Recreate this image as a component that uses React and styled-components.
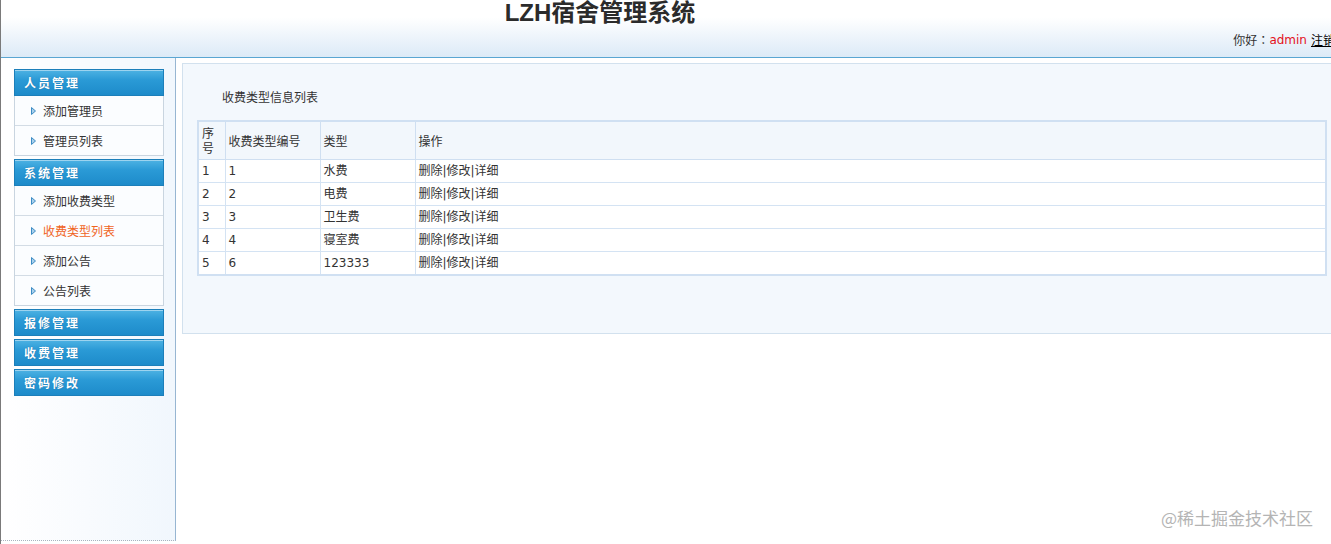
import React from "react";
import styled, { createGlobalStyle } from "styled-components";

const GlobalStyle = createGlobalStyle`
  html, body { margin: 0; padding: 0; height: 100%; }
  body {
    font-family: "DejaVu Sans", "Noto Sans CJK SC", sans-serif;
    font-size: 12px;
    color: #333;
    background: #fff;
    overflow: hidden;
  }
  #root { height: 544px; }
`;

const Page = styled.div`
  position: relative;
  height: 544px;
  border-left: 1px solid #7a7a7a;
  box-sizing: border-box;
  overflow: hidden;
`;

const Header = styled.header`
  height: 58px;
  box-sizing: border-box;
  border-bottom: 1px solid #5aa6d2;
  background: linear-gradient(to bottom, #ffffff 0%, #ffffff 30%, #dceaf7 100%);
  display: flex;
  flex-direction: column;
  overflow: hidden;
`;

const Title = styled.h1`
  margin: 0;
  height: 28px;
  line-height: 26px;
  text-align: center;
  font-family: "Liberation Sans", "Noto Sans CJK SC", sans-serif;
  font-size: 24px;
  font-weight: bold;
  color: #2b2b2b;
  padding-right: 132px;
`;

const UserBar = styled.div`
  display: flex;
  justify-content: flex-end;
  margin-top: 4px;
  margin-right: -4px;
  white-space: nowrap;
  font-size: 12px;
  color: #333;
  line-height: 16px;
`;

const Greeting = styled.span`
  font-family: "Noto Sans CJK TC", "Noto Sans CJK SC", sans-serif;
`;

const UserName = styled.span`
  color: #e4121b;
  margin-right: 4px;
`;

const Logout = styled.a`
  color: #000;
  text-decoration: underline;
  font-family: "Noto Sans CJK SC", sans-serif;
`;

const Body = styled.div`
  display: flex;
  align-items: flex-start;
`;

const Sidebar = styled.aside`
  width: 175px;
  height: 483px;
  flex-shrink: 0;
  box-sizing: border-box;
  border-right: 1px solid #97b6d2;
  border-bottom: 1px dotted #a9b4bf;
  background: linear-gradient(to right, #ffffff 0%, #f1f7fd 100%);
  padding: 11px 0 0 13px;
  display: flex;
  flex-direction: column;
  gap: 3px;
`;

const Group = styled.div`
  width: 150px;
`;

const GroupHead = styled.div`
  height: 27px;
  box-sizing: border-box;
  border: 1px solid #1c7fba;
  background: linear-gradient(to bottom, #4db2e3 0%, #2a9ad6 40%, #1d8bca 100%);
  box-shadow: inset 0 1px 0 rgba(255, 255, 255, 0.45);
  color: #fff;
  font-family: "Noto Sans CJK SC", sans-serif;
  font-weight: bold;
  font-size: 12px;
  letter-spacing: 2px;
  line-height: 25px;
  padding-left: 9px;
  text-shadow: 0 0 1px rgba(0, 60, 110, 0.5);
`;

const ItemList = styled.ul`
  list-style: none;
  margin: 0;
  padding: 0;
  border-left: 1px solid #c9d5e0;
  border-right: 1px solid #c9d5e0;
  background: #fbfdff;
`;

const Item = styled.li`
  height: 30px;
  box-sizing: border-box;
  border-bottom: 1px solid ${(p) => (p.$last ? "#c9d5e0" : "#d3dce5")};
  display: flex;
  align-items: center;
  padding-left: 16px;
  gap: 7px;
  font-family: "Noto Sans CJK SC", sans-serif;
  font-size: 12px;
  color: ${(p) => (p.$active ? "#f0641e" : "#333")};
`;

const Arrow = () => (
  <svg width="5" height="8" viewBox="0 0 5 8">
    <path d="M0.5 0.5 L4.5 4 L0.5 7.5 Z" fill="#a9d0ec" stroke="#3d8cc4" strokeWidth="1" />
  </svg>
);

const Main = styled.main`
  flex: 1;
  padding: 5px 0 0 6px;
  min-width: 0;
`;

const Panel = styled.section`
  height: 271px;
  box-sizing: border-box;
  margin-right: -6px;
  background: #f3f8fd;
  border: 1px solid #d2e1ee;
  padding: 24px 9px 0 14px;
`;

const PanelTitle = styled.div`
  font-family: "Noto Sans CJK SC", sans-serif;
  font-size: 12px;
  line-height: 18px;
  color: #333;
  padding-left: 25px;
  margin-bottom: 14px;
`;

const Table = styled.table`
  width: 100%;
  border-collapse: collapse;
  border: 2px solid #d0e0f2;
  font-family: "DejaVu Sans", "Noto Sans CJK SC", sans-serif;
  font-size: 12px;
  color: #333;
`;

const Th = styled.th`
  font-weight: normal;
  text-align: left;
  vertical-align: middle;
  border: 1px solid #cfdff1;
  background: #f2f7fc;
  height: 38px;
  padding: 0 3px;
  line-height: 15px;
  font-family: "Noto Sans CJK SC", sans-serif;
  width: ${(p) => p.$w || "auto"};
  box-sizing: border-box;
`;

const Td = styled.td`
  border: 1px solid #d4e3f3;
  background: #fff;
  height: 22px;
  padding: 0 3px;
  line-height: 14px;
`;

const Watermark = styled.div`
  position: absolute;
  right: 18px;
  bottom: 14px;
  font-family: "Noto Sans CJK SC", sans-serif;
  font-size: 17px;
  color: #b4b4b4;
  text-shadow: 0 0 2px #fff;
  pointer-events: none;
`;

const menus = [
  { title: "人员管理", items: ["添加管理员", "管理员列表"] },
  { title: "系统管理", items: ["添加收费类型", "收费类型列表", "添加公告", "公告列表"] },
  { title: "报修管理", items: [] },
  { title: "收费管理", items: [] },
  { title: "密码修改", items: [] },
];

const rows = [
  [1, 1, "水费"],
  [2, 2, "电费"],
  [3, 3, "卫生费"],
  [4, 4, "寝室费"],
  [5, 6, "123333"],
];

export default function App() {
  return (
    <>
      <GlobalStyle />
      <Page>
        <Header>
          <Title>LZH宿舍管理系统</Title>
          <UserBar>
            <Greeting>你好：</Greeting>
            <UserName>admin</UserName>
            <Logout>注销</Logout>
          </UserBar>
        </Header>
        <Body>
          <Sidebar>
            {menus.map((m) => (
              <Group key={m.title}>
                <GroupHead>{m.title}</GroupHead>
                {m.items.length > 0 && (
                  <ItemList>
                    {m.items.map((it, i) => (
                      <Item
                        key={it}
                        $last={i === m.items.length - 1}
                        $active={it === "收费类型列表"}
                      >
                        <Arrow />
                        {it}
                      </Item>
                    ))}
                  </ItemList>
                )}
              </Group>
            ))}
          </Sidebar>
          <Main>
            <Panel>
              <PanelTitle>收费类型信息列表</PanelTitle>
              <Table>
                <thead>
                  <tr>
                    <Th $w="27px">序号</Th>
                    <Th $w="95px">收费类型编号</Th>
                    <Th $w="95px">类型</Th>
                    <Th>操作</Th>
                  </tr>
                </thead>
                <tbody>
                  {rows.map((r) => (
                    <tr key={r[0]}>
                      <Td>{r[0]}</Td>
                      <Td>{r[1]}</Td>
                      <Td>{r[2]}</Td>
                      <Td>删除|修改|详细</Td>
                    </tr>
                  ))}
                </tbody>
              </Table>
            </Panel>
          </Main>
        </Body>
        <Watermark>@稀土掘金技术社区</Watermark>
      </Page>
    </>
  );
}
